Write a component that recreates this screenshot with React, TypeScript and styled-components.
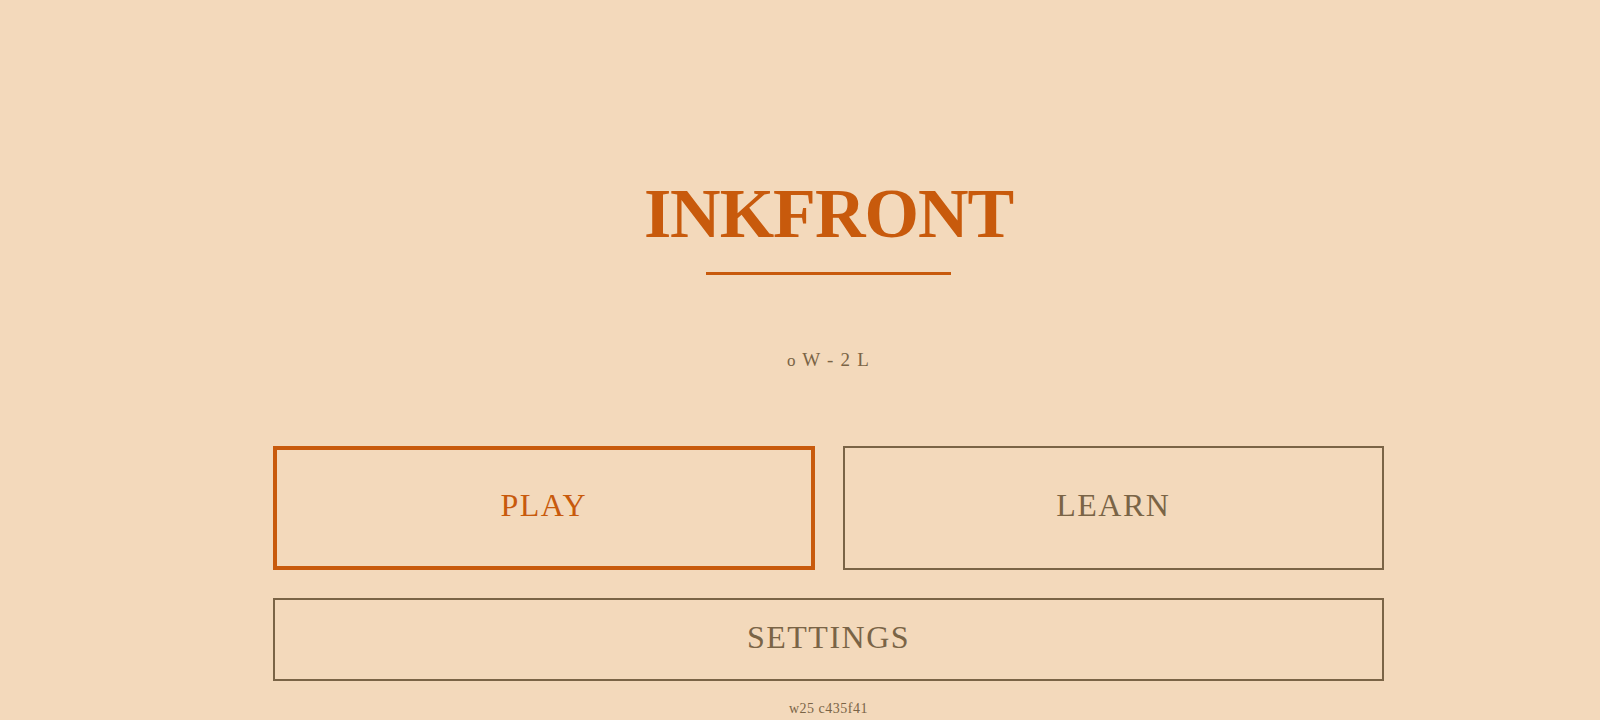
import React from "react";
import styled, { createGlobalStyle } from "styled-components";

const ORANGE = "#c85a0c";
const BROWN = "#7a6446";
const BG = "#f3d9bb";

const Global = createGlobalStyle`
  html, body {
    margin: 0;
    padding: 0;
    background: ${BG};
    overflow: hidden;
  }
  * { box-sizing: border-box; }
`;

const Page = styled.main`
  min-height: 100vh;
  background: ${BG};
  padding: 178px 0 0 273px;
  font-family: "Liberation Serif", "DejaVu Serif", serif;
`;

const Column = styled.div`
  width: 1111px;
  display: flex;
  flex-direction: column;
  align-items: center;
`;

const Title = styled.h1`
  margin: 0;
  font-size: 70px;
  line-height: 72px;
  font-weight: 700;
  letter-spacing: -1px;
  color: ${ORANGE};
  text-transform: uppercase;
`;

const Rule = styled.div`
  width: 245px;
  height: 3px;
  margin-top: 22px;
  background: ${ORANGE};
`;

const Record = styled.div`
  margin-top: 73px;
  font-size: 19px;
  line-height: 24px;
  letter-spacing: 1.2px;
  color: ${BROWN};
`;

const Zero = styled.span`
  font-size: 17px;
`;

const ButtonRow = styled.div`
  margin-top: 73px;
  width: 100%;
  display: grid;
  grid-template-columns: 1fr 1fr;
  gap: 28px;
`;

const MenuButton = styled.button<{ $primary?: boolean; $tall?: boolean }>`
  height: ${(p) => (p.$tall ? 124 : 83)}px;
  width: 100%;
  background: transparent;
  border: ${(p) => (p.$primary ? `4px solid ${ORANGE}` : `2px solid ${BROWN}`)};
  color: ${(p) => (p.$primary ? ORANGE : BROWN)};
  font-family: "Liberation Serif", "DejaVu Serif", serif;
  font-size: 32px;
  letter-spacing: 1.5px;
  text-transform: uppercase;
  display: flex;
  align-items: center;
  justify-content: center;
  padding: 0 0 5px;
  cursor: pointer;
`;

const SettingsWrap = styled.div`
  margin-top: 28px;
  width: 100%;
`;

const Version = styled.div`
  margin-top: 19px;
  font-size: 14px;
  line-height: 18px;
  letter-spacing: 0.5px;
  color: ${BROWN};
`;

export default function App() {
  return (
    <>
      <Global />
      <Page>
        <Column>
          <Title>Inkfront</Title>
          <Rule />
          <Record>
            <Zero>o</Zero> W - 2 L
          </Record>
          <ButtonRow>
            <MenuButton $primary $tall>Play</MenuButton>
            <MenuButton $tall>Learn</MenuButton>
          </ButtonRow>
          <SettingsWrap>
            <MenuButton>Settings</MenuButton>
          </SettingsWrap>
          <Version>w25 c435f41</Version>
        </Column>
      </Page>
    </>
  );
}
